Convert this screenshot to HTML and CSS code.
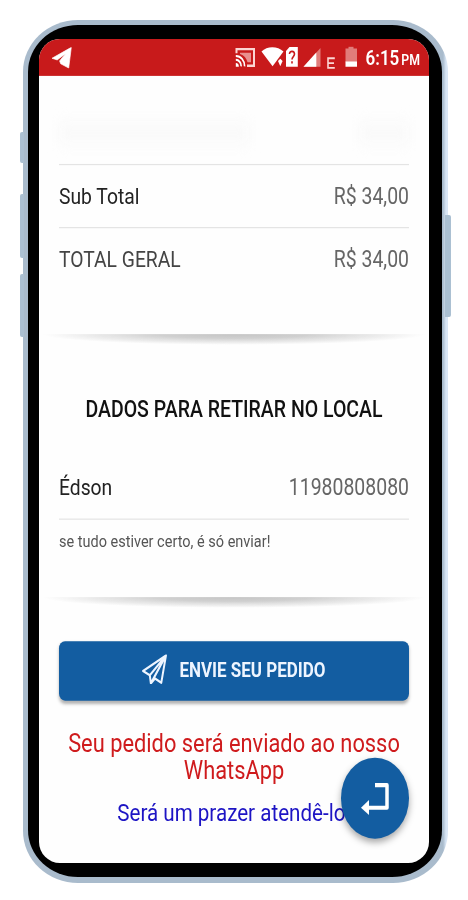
FILE: index.html
```
<!DOCTYPE html>
<html lang="pt-BR">
<head>
    <meta charset="UTF-8">
    <meta name="viewport" content="width=device-width, initial-scale=1.0">
    <title>Pedido</title>
    <link rel="stylesheet" href="styles.css">
</head>
<body>
    <div class="phone">
        <div class="key key-1"></div>
        <div class="key key-2"></div>
        <div class="key key-3"></div>
        <div class="key key-power"></div>
        <div class="bezel">
            <div class="screen">
                <div class="app">
                    <div class="status-bar">
                        <svg class="plane" viewBox="0 0 20 18" width="20" height="18">
                            <path d="M0 9.2 L19.3 0 L16.7 17.4 L8.7 13.8 L7.6 11.4 L13.5 5.3 L5.2 10.6 Z" fill="#fff" stroke="#fff" stroke-width=".6"/>
                        </svg>
                        <svg class="status-icons" viewBox="0 0 125 20" width="125" height="20">
                            <path d="M1.5 6 V2.5 H19 V16.5 H12" fill="none" stroke="#fbd5d3" stroke-width="2"/>
                            <path d="M5 5.5 H16 V13.5 H12.5 C11.5 10 9 7.5 5 6.5 Z" fill="#e98f8e"/>
                            <path d="M.8 8.2 A8.6 8.6 0 0 1 9.6 17 M.8 11.5 A5.3 5.3 0 0 1 6.2 17" fill="none" stroke="#fff" stroke-width="1.7"/>
                            <path d="M.8 14.2 A3 3 0 0 1 3.8 17.3 H.8 Z" fill="#fff"/>
                            <path d="M26.5 4.5 C32 -.3 42.5 -.3 48.5 4.5 L37.6 17 Z" fill="#fff"/>
                            <path d="M43 12.5 l2.3 -2 l2.3 2 l-2.3 4.4 Z" fill="#fff"/>
                            <path d="M54.5 .7 H62.8 V17.3 H51 V4 Z" fill="#fff"/>
                            <path d="M54.5 6.5 C54.5 3.6 59.5 3.7 59.5 6.7 C59.5 8.8 57 8.9 57 11.3 M57 12.8 V14.6" fill="none" stroke="#c81a1b" stroke-width="1.6"/>
                            <path d="M68.5 17.3 L85.5 1.5 V17.3 Z" fill="#e17c7a"/>
                            <path d="M68.5 17.3 L81.3 5.3 V17.3 Z" fill="#fff"/>
                            <path d="M99.8 10.2 H93 V18.3 H99.8 M93 14.3 H99" fill="none" stroke="#fbd5d3" stroke-width="1.6"/>
                            <path d="M110.5 2 H113.5 V.5 H118.5 V2 H122 V13.5 H110.5 Z" fill="#e17c7a"/>
                            <path d="M110.5 13 H122 V17.3 H110.5 Z" fill="#fff"/>
                        </svg>
                        <div class="clock">6:15<span>PM</span></div>
                    </div>

                    <div class="item">
                        <div class="ghost"></div>
                        <div class="ghost ghost-price"></div>
                    </div>
                    <div class="row"><span>Sub Total</span><span class="value">R$ 34,00</span></div>
                    <div class="row"><span class="total">TOTAL GERAL</span><span class="value">R$ 34,00</span></div>
                    <div class="shadow-line first"></div>

                    <h2>DADOS PARA RETIRAR NO LOCAL</h2>
                    <div class="row customer"><span>Édson</span><span class="value">11980808080</span></div>
                    <div class="note">se tudo estiver certo, é só enviar!</div>
                    <div class="shadow-line"></div>

                    <button class="send-btn">
                        <svg viewBox="0 0 24 24" width="25" height="25" fill="none" stroke="#eef5ff" stroke-width="1.9" stroke-linejoin="round">
                            <path d="M23 1 L1 13.5 L7.5 17 L8.5 23.5 L12.5 19.6 L18.5 23 Z M7.5 17 L23 1 L9.5 22"/>
                        </svg>
                        <span>ENVIE SEU PEDIDO</span>
                    </button>

                    <p class="sent">Seu pedido será enviado ao nosso WhatsApp</p>
                    <p class="thanks">Será um prazer atendê-lo!</p>

                    <button class="fab">
                        <svg viewBox="0 0 28 28" width="28" height="28">
                            <path d="M14 3 H26 V22 H6" fill="none" stroke="#fff" stroke-width="3.5" stroke-linejoin="round"/>
                            <path d="M0 22 L8 15.5 V28 Z" fill="#fff"/>
                        </svg>
                    </button>
                </div>
            </div>
        </div>
    </div>
</body>
</html>
```
FILE: styles.css
```
* {
    box-sizing: border-box;
}
body {
    margin: 0;
    height: 900px;
    padding: 20px 0 0 23px;
    background: #fff;
    font-family: Roboto, sans-serif;
    overflow: hidden;
}
.phone {
    position: relative;
    width: 425px;
    height: 863px;
    padding: 5px 6px 6px 5px;
    border-radius: 55px / 52px;
    background: linear-gradient(90deg, #a9bbcc 0, #a9bbcc 420px, #d9e6f5 423px);
}
.key {
    position: absolute;
    left: -3px;
    width: 4px;
    border-radius: 2px 0 0 2px;
    background: #abc0d2;
}
.key-1 {
    top: 112px;
    height: 31px;
}
.key-2 {
    top: 174px;
    height: 64px;
}
.key-3 {
    top: 254px;
    height: 63px;
}
.key-power {
    left: auto;
    right: -3px;
    top: 195px;
    height: 102px;
    width: 6px;
    border-radius: 0 2px 2px 0;
}
.bezel {
    height: 100%;
    padding: 14px 13px 14px 11px;
    border-radius: 50px / 47px;
    background: #000;
}
.screen {
    height: 100%;
    border-radius: 21px;
    background: #fefefe;
    overflow: hidden;
}
/* the whole app is drawn on a taller display */
.app {
    position: relative;
    height: 692px;
    transform: scaleY(1.19);
    transform-origin: 0 0;
}
.status-bar {
    display: flex;
    height: 30.5px;
    padding: 0 9px 0 13px;
    background: #c81a1b;
    color: #fff;
}
.plane {
    margin-top: 7px;
}
.status-icons {
    margin: 6px 0 0 auto;
}
.clock {
    margin-left: 6px;
    font-size: 17px;
    font-weight: 600;
    line-height: 33px;
    white-space: nowrap;
}
.clock span {
    margin-left: 2px;
    font-size: 12.3px;
}
.item {
    display: flex;
    justify-content: space-between;
    height: 74.5px;
    padding: 38px 20px 0;
}
.ghost {
    width: 190px;
    height: 20px;
    background: #fafafa;
    filter: blur(6px);
}
.ghost-price {
    width: 50px;
}
.row {
    display: flex;
    justify-content: space-between;
    height: 53px;
    margin: 0 20px;
    border-top: 1.5px solid #e4e4e4;
    font-size: 19.3px;
    line-height: 53px;
    color: #222;
}
.total {
    color: #444;
}
.value {
    font-size: 19.45px;
    color: #666;
}
.shadow-line {
    height: 9px;
    margin: 0 4px;
    background: radial-gradient(50% 100% at 50% 0, #c4c4c4, #d0d0d0 40%, rgba(255, 255, 255, 0));
}
.first {
    margin-top: 36.5px;
}
h2 {
    margin: 43px 0 0;
    font-size: 19.5px;
    font-weight: 500;
    line-height: 24px;
    text-align: center;
    color: #111;
}
.customer {
    margin-top: 27px;
    border-top: 0;
    border-bottom: 1.5px solid #e4e4e4;
    line-height: 52px;
}
.note {
    margin: 9.5px 20px 36px;
    font-size: 14.5px;
    line-height: 20px;
    color: #555;
}
.send-btn {
    display: flex;
    justify-content: center;
    align-items: center;
    gap: 12px;
    width: 350px;
    height: 50px;
    margin: 27.5px 0 0 20px;
    padding: 0 0 2px;
    border: 0;
    border-radius: 6px;
    background: #135da1;
    box-shadow: 0 2px 3px rgba(0, 0, 0, 0.3);
    color: #eef5ff;
    font-family: inherit;
    font-size: 17px;
    font-weight: 700;
}
p {
    margin: 0;
    text-align: center;
}
.sent {
    margin-top: 24px;
    padding: 0 20px;
    font-size: 21.85px;
    line-height: 23.5px;
    color: #cf1b1d;
}
.thanks {
    margin-top: 11px;
    font-size: 20.6px;
    line-height: 24px;
    color: #1d14c4;
}
.fab {
    position: absolute;
    left: 302px;
    top: 604px;
    display: flex;
    justify-content: center;
    align-items: center;
    width: 67.5px;
    height: 67.5px;
    padding: 0;
    border: 0;
    border-radius: 50%;
    background: #135da1;
    box-shadow: 0 3px 7px rgba(0, 0, 0, 0.35);
}
```
